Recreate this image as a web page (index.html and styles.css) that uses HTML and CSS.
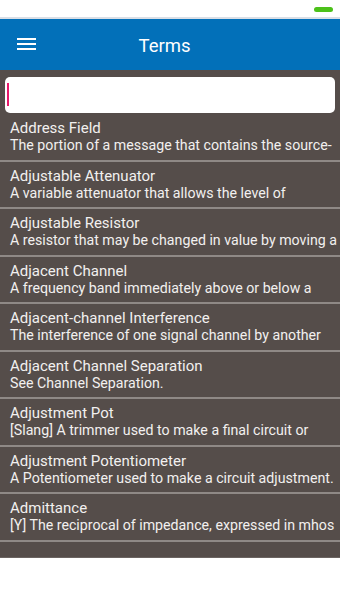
FILE: index.html
```html
<!DOCTYPE html>
<html>
<head>
<meta charset="utf-8">
<link rel="stylesheet" href="styles.css">
</head>
<body>
<div class="status"><span class="battery"></span></div>
<header class="appbar">
  <span class="menu">
    <svg width="19" height="13" viewBox="0 0 19 13"><rect x="0" y="0" width="19" height="2" fill="#fff"/><rect x="0" y="5" width="19" height="2" fill="#fff"/><rect x="0" y="10" width="19" height="2" fill="#fff"/></svg>
  </span>
  <h1 class="title">Terms</h1>
</header>
<main class="list">
  <div class="search"><span class="cursor"></span></div>
  <div class="row"><div class="term">Address Field</div><div class="desc">The portion of a message that contains the source-</div></div>
  <div class="row"><div class="term">Adjustable Attenuator</div><div class="desc">A variable attenuator that allows the level of</div></div>
  <div class="row"><div class="term">Adjustable Resistor</div><div class="desc">A resistor that may be changed in value by moving a</div></div>
  <div class="row"><div class="term">Adjacent Channel</div><div class="desc">A frequency band immediately above or below a</div></div>
  <div class="row"><div class="term">Adjacent-channel Interference</div><div class="desc">The interference of one signal channel by another</div></div>
  <div class="row"><div class="term">Adjacent Channel Separation</div><div class="desc">See Channel Separation.</div></div>
  <div class="row"><div class="term">Adjustment Pot</div><div class="desc">[Slang] A trimmer used to make a final circuit or</div></div>
  <div class="row"><div class="term">Adjustment Potentiometer</div><div class="desc">A Potentiometer used to make a circuit adjustment.</div></div>
  <div class="row"><div class="term">Admittance</div><div class="desc">[Y] The reciprocal of impedance, expressed in mhos</div></div>
</main>
</body>
</html>
```
FILE: styles.css
```css
* { box-sizing: border-box; margin: 0; padding: 0; }
html, body { width: 340px; height: 604px; background: #fff; overflow: hidden; }
body { font-family: Roboto, "Noto Sans", sans-serif; }
.status {
  height: 19px;
  background: #fff;
  border-bottom: 2px solid #d9dee6;
  display: flex;
  justify-content: flex-end;
  padding: 7px 7px 0 0;
}
.battery {
  width: 19px; height: 5px; border-radius: 3px; background: #4cc11a;
}
.appbar {
  height: 51px;
  background: #0270b9;
  display: flex;
  align-items: center;
  padding-left: 17px;
}
.menu { display: flex; width: 19px; height: 13px; margin-top: -1px; }
.title {
  flex: 1;
  text-align: center;
  color: #fff;
  font-weight: 400;
  font-size: 18.5px;
  padding-right: 47px;
  margin-top: 2px;
}
.list {
  background: #554d4a;
  padding: 7px 0 15px;
  border-bottom: 1px solid #6b6461;
}
.search {
  margin: 0 5px 1px;
  height: 36px;
  background: #fff;
  border-radius: 5px;
  padding: 6px 0 0 2px;
}
.cursor { display: block; width: 2px; height: 23px; background: #e8196a; }
.row {
  padding: 5px 10px 5.5px;
  border-bottom: 2px solid #8f8986;
  color: #f2f0ef;
  white-space: nowrap;
  overflow: hidden;
}
.term { font-size: 15px; line-height: 18px; }
.desc { font-size: 14.2px; line-height: 17px; }
```
